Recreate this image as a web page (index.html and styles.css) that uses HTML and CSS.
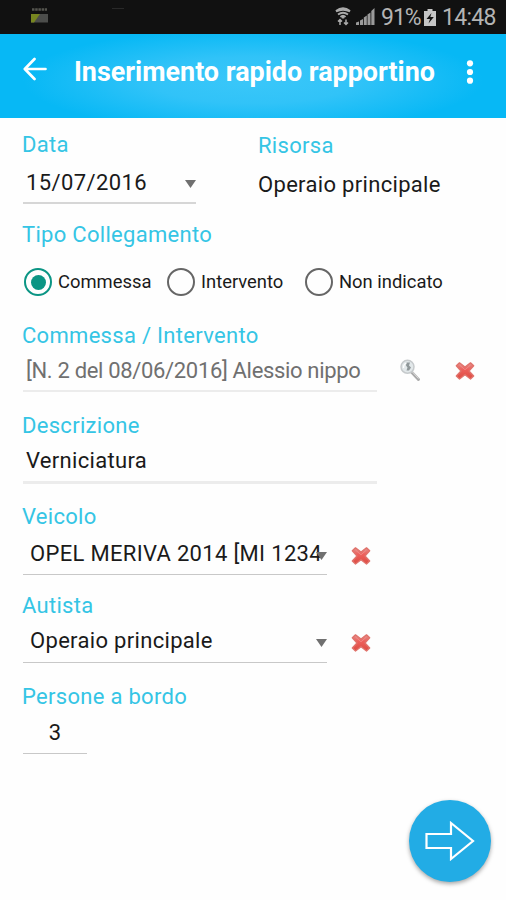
FILE: index.html
```html
<!DOCTYPE html>
<html lang="it">
<head>
<meta charset="utf-8">
<title>Inserimento rapido rapportino</title>
<link rel="stylesheet" href="styles.css">
</head>
<body>
<svg class="defs" width="0" height="0" aria-hidden="true">
  <defs>
    <linearGradient id="red" x1="0" y1="0" x2="0" y2="1">
      <stop offset="0" stop-color="#e08f8a"/><stop offset=".4" stop-color="#ee605c"/><stop offset="1" stop-color="#dc4c42"/>
    </linearGradient>
    <symbol id="cross" viewBox="0 0 20 20">
      <path d="M4.500 1.800 10 6l5.500-4.200 3.200 3L14 10l4.700 5-3.200 3L10 13.700 4.500 18l-3.200-3L6 10 1.300 4.800z" fill="url(#red)" stroke="#e0736c" stroke-width="1.300" stroke-linejoin="round"/>
      <path d="M4.500 4 10 8.800 15.500 4" fill="none" stroke="#f6a39f" stroke-width="1" opacity=".5"/>
    </symbol>
  </defs>
</svg>
<div class="status">
  <svg class="notice" width="110" height="34" viewBox="0 0 110 34">
    <path d="M12 9.500h15" stroke="#55554f" stroke-width="2.500" stroke-dasharray="2.500 .7"/>
    <rect x="11" y="14" width="17" height="8.500" fill="#4c4d4b"/>
    <path d="M11 14h9l-6 8.500h-3z" fill="#778620"/>
    <path d="M92 8.500h12" stroke="#292929" stroke-width="1"/>
  </svg>
  <div class="system">
    <svg class="wifi" width="16" height="19" viewBox="0 0 16 19" fill="none" stroke="#aaa" stroke-width="1.900">
      <path d="M1 4Q8-1.500 15 4M1 4.500Q8 1 15 4.500M3 7.500Q8 4 13 7.500M5.500 10Q8 7.500 10.500 10"/>
      <path d="M8 9v2.500" stroke-width="2.500"/>
      <path d="M5 18v-5M3 14.500l2-2 2 2M11 12.500v5M9 15.500l2 2 2-2" stroke-width="1.500"/>
    </svg>
    <svg class="signal" width="19" height="18" viewBox="0 0 19 18" fill="#9a9a9a">
      <path d="M0 18v-2.500l3-1V18zM4 18v-4.500l3-1.500v6zM7.800 18v-7.500l3-2V18zM11.500 18V7.500l3-2V18zM15.300 18V4L18.500 1v17z"/>
    </svg>
    <span class="percent">91%</span>
    <svg class="battery" width="12" height="17" viewBox="0 0 12 17">
      <path d="M0 2h3.500V0h5v2H12v15H0z" fill="#c5c5c5"/>
      <path d="M7.500 4 2.500 10H6l-1.500 4.500L9.800 8H6.300z" fill="#111"/>
    </svg>
    <span class="time">14:48</span>
  </div>
</div>
<header class="appbar">
  <svg class="back" width="24" height="24" viewBox="0 0 24 24" fill="none" stroke="#fff" stroke-width="2.700" stroke-linecap="round" stroke-linejoin="round">
    <path d="M11.500 2 1.800 12l9.700 10M2 12h20.500"/>
  </svg>
  <h1>Inserimento rapido rapportino</h1>
  <svg class="more" width="8" height="24" viewBox="0 0 8 24" fill="#fff"><circle cx="4" cy="3.300" r="3.100"/><circle cx="4" cy="12" r="3.100"/><circle cx="4" cy="20.700" r="3.100"/></svg>
</header>
<main class="form">
  <div class="top-row">
    <div class="field date">
      <div class="label">Data</div>
      <div class="control date-control"><span>15/07/2016</span><i class="caret"></i></div>
    </div>
    <div class="field resource">
      <div class="label">Risorsa</div>
      <div class="plain">Operaio principale</div>
    </div>
  </div>
  <div class="field type">
    <div class="label">Tipo Collegamento</div>
    <div class="radios">
      <div class="radio on"><i class="ring"></i><span>Commessa</span></div>
      <div class="radio second"><i class="ring"></i><span>Intervento</span></div>
      <div class="radio third"><i class="ring"></i><span>Non indicato</span></div>
    </div>
  </div>
  <div class="field job">
    <div class="label">Commessa / Intervento</div>
    <div class="line">
      <div class="control job-control"><span>[N. 2 del 08/06/2016] Alessio nippo</span></div>
      <svg class="search" width="22" height="23" viewBox="0 0 22 23">
        <path d="m12.500 13 7 7.500" stroke="#aaa" stroke-width="3" stroke-linecap="round"/>
        <path d="m13 12.500 6.500 7" stroke="#ddd" stroke-width="1"/>
        <circle cx="8.500" cy="7.800" r="6.500" fill="#e2e8ea" stroke="#c6cacc" stroke-width="1.500"/>
        <path d="M7.500 3.500h3.500l-1 3 2 2-2 3H7.500l1-3-1.500-2z" fill="#8f9799"/>
        <path d="M4.500 9q0-4 3-5" fill="none" stroke="#fff" stroke-width="1.300"/>
      </svg>
      <svg class="clear" width="20" height="20"><use href="#cross"/></svg>
    </div>
  </div>
  <div class="field desc">
    <div class="label">Descrizione</div>
    <div class="control desc-control"><span>Verniciatura</span></div>
  </div>
  <div class="field vehicle">
    <div class="label">Veicolo</div>
    <div class="line">
      <div class="control select vehicle-control"><span>OPEL MERIVA 2014 [MI 1234</span><i class="caret over"></i></div>
      <svg class="clear" width="20" height="20"><use href="#cross"/></svg>
    </div>
  </div>
  <div class="field driver">
    <div class="label">Autista</div>
    <div class="line">
      <div class="control select driver-control"><span>Operaio principale</span><i class="caret"></i></div>
      <svg class="clear" width="20" height="20"><use href="#cross"/></svg>
    </div>
  </div>
  <div class="field people">
    <div class="label">Persone a bordo</div>
    <div class="control people-control">3</div>
  </div>
</main>
<button class="next" aria-label="Avanti">
  <svg width="52" height="42" viewBox="0 0 52 42" fill="none" stroke="#fff" stroke-width="2.200">
    <path d="M2.500 14H27V3l22 18-22 18V28H2.500z"/>
  </svg>
</button>
</body>
</html>
```
FILE: styles.css
```css
* { box-sizing: border-box; }
body {
  margin: 0;
  width: 506px;
  height: 900px;
  overflow: hidden;
  background: #fefefe;
  color: #1a1a1a;
  font-family: Roboto, "Liberation Sans", sans-serif;
  font-size: 22px;
}
.defs { position: absolute; }
svg { display: block; flex: none; }
.status {
  display: flex;
  justify-content: space-between;
  height: 34px;
  padding: 0 11px 0 20px;
  background: #111;
  color: #b4b4b4;
}
.system { display: flex; align-items: flex-start; }
.wifi { margin: 7px 5px 0 0; }
.signal { margin: 7px 6px 0 0; }
.percent, .time { font-size: 23px; line-height: 35px; white-space: nowrap; }
.percent { width: 40px; letter-spacing: -1px; }
.battery { margin: 9px 6px 0 3px; }
.time { width: 53px; letter-spacing: -0.7px; }
.appbar {
  display: flex;
  align-items: flex-start;
  height: 84px;
  padding-left: 23px;
  background: radial-gradient(ellipse 230px 52px at 50% 55%, #3ac7f9 0%, #31c3f8 45%, #07b8f5 100%);
  color: #fff;
}
.back { margin-top: 23px; }
.appbar h1 {
  margin: 0 0 0 27px;
  width: 366px;
  font-size: 26.9px;
  font-weight: 700;
  line-height: 76px;
  white-space: nowrap;
}
.more { margin: 26px 0 0 26px; }
.form { padding: 13px 0 0 22px; }
.label { height: 28px; line-height: 28px; color: #35c5e5; white-space: nowrap; letter-spacing: 0.3px; }
.control {
  display: flex;
  align-items: flex-start;
  margin-left: 1px;
  border-bottom: 1px solid #c8c8c8;
  white-space: nowrap;
  letter-spacing: 0.32px;
}
.caret {
  flex: none;
  width: 11px;
  height: 8px;
  margin-left: auto;
  background: #707070;
  clip-path: polygon(0 0, 100% 0, 50% 100%);
}
.line { display: flex; align-items: flex-start; }
.top-row { display: flex; height: 89px; }
.date { width: 236px; }
.date-control { width: 173px; height: 44px; margin-top: 1px; padding-left: 3px; border-bottom: 2px solid #d6d6d6; line-height: 45px; letter-spacing: 0.4px; }
.date-control .caret { margin-top: 20px; }
.resource { padding-top: 1px; }
.plain { line-height: 49px; white-space: nowrap; letter-spacing: 0.32px; }
.type { height: 102px; padding-top: 1px; }
.radios { display: flex; padding: 19px 0 0 2px; font-size: 18.4px; line-height: 27px; white-space: nowrap; }
.radio { display: flex; align-items: flex-start; width: 143px; }
.second { width: 138px; }
.ring {
  display: flex;
  align-items: center;
  justify-content: center;
  flex: none;
  width: 28px;
  height: 28px;
  margin-right: 6px;
  border: 2px solid #666;
  border-radius: 50%;
}
.on .ring { border-color: #0b9584; }
.on .ring::before { content: ""; width: 15px; height: 15px; border-radius: 50%; background: #0b9584; }
.job { height: 90px; }
.job-control { width: 354px; height: 42px; padding-left: 3px; border-bottom: 2px solid #ececec; color: #707070; line-height: 41px; letter-spacing: -0.33px; }
.search { margin: 9px 0 0 22px; }
.job .clear { margin: 11px 0 0 34px; }
.desc { height: 91px; }
.desc-control { width: 354px; height: 44px; padding-left: 3px; border-bottom: 3px solid #ececec; line-height: 41px; }
.vehicle { height: 89px; }
.select { width: 304px; padding-left: 7px; }
.vehicle-control { height: 44px; line-height: 45px; position: relative; }
.over { position: absolute; right: 0; top: 21px; }
.vehicle .clear { margin: 15px 0 0 24px; }
.driver { height: 91px; }
.driver-control { height: 43px; line-height: 42px; }
.driver-control .caret { margin-top: 19px; }
.driver .clear { margin: 13px 0 0 24px; }
.people-control { width: 64px; height: 43px; justify-content: center; line-height: 43px; }
.next {
  position: absolute;
  left: 409px;
  top: 800px;
  display: flex;
  align-items: center;
  justify-content: center;
  width: 82px;
  height: 82px;
  padding: 0;
  border: 0;
  border-radius: 50%;
  background: #22ace5;
  box-shadow: 0 2px 4px rgba(0, 0, 0, 0.35);
}
```
